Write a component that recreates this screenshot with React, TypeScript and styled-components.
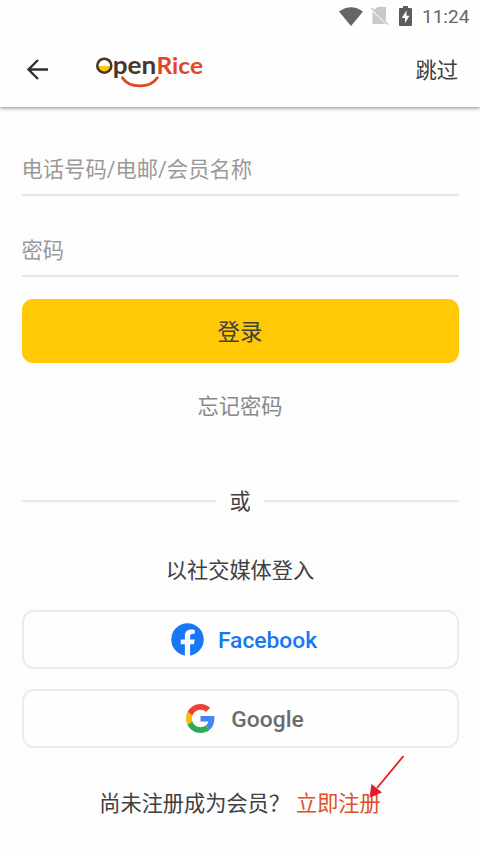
import React from "react";
import styled, { createGlobalStyle } from "styled-components";

const GlobalStyle = createGlobalStyle`
  * { box-sizing: border-box; }
  html, body { margin: 0; padding: 0; background: #fdfdfd; }
  body { font-family: Roboto, "Noto Sans CJK SC", sans-serif; color: #404040; }
  button, input { font: inherit; color: inherit; }
`;

const Screen = styled.div`
  width: 480px;
  height: 853px;
  overflow: hidden;
  display: flex;
  flex-direction: column;
  background: #fdfdfd;
`;

const Header = styled.header`
  flex: none;
  height: 107px;
  background: #fefefe;
  box-shadow: 0 1px 4px rgba(0, 0, 0, 0.45);
`;

const StatusBar = styled.div`
  height: 32px;
  padding-right: 11px;
  display: flex;
  align-items: center;
  justify-content: flex-end;
`;

const Clock = styled.span`
  font-size: 19px;
  line-height: 32px;
  width: 47px;
  margin: 1px 0 0 10px;
  color: #666;
  white-space: nowrap;
`;

const NavBar = styled.nav`
  height: 75px;
  padding: 0 22px 0 26px;
  display: flex;
  align-items: center;
`;

const PlainButton = styled.button`
  border: 0;
  padding: 0;
  background: none;
  display: flex;
`;

const Skip = styled(PlainButton)`
  margin-left: auto;
  padding-top: 2px;
  font-size: 21.3px;
  line-height: 30px;
`;

const Logo = styled.svg`
  margin-left: 43px;
  display: block;
`;

const Content = styled.main`
  flex: 1;
  padding: 0 21.5px;
  display: flex;
  flex-direction: column;
`;

const Field = styled.input<{ $height: number }>`
  width: 100%;
  height: ${(p) => p.$height}px;
  padding: ${(p) => p.$height - 51}px 0 0;
  border: 0;
  border-bottom: 2px solid #e6e6e6;
  border-radius: 0;
  outline: 0;
  background: none;
  font-size: 21.3px;
  &::placeholder { color: #999; opacity: 1; }
`;

const LoginButton = styled.button`
  flex: none;
  height: 64px;
  margin-top: 21.5px;
  padding: 0 0 1px;
  border: 0;
  border-radius: 11px;
  background: #ffc905;
  font-size: 22.5px;
`;

const Forgot = styled(PlainButton)`
  align-self: center;
  margin-top: 28px;
  font-size: 21.2px;
  line-height: 32px;
  color: #888;
`;

const Divider = styled.div`
  margin-top: 62px;
  height: 32px;
  display: flex;
  align-items: center;
  gap: 13.5px;
  font-size: 21.2px;
  line-height: 32px;
  &::before, &::after { content: ""; flex: 1; height: 2px; background: #e9e9e9; }
`;

const DividerLabel = styled.span`
  padding-top: 2px;
`;

const SocialTitle = styled.h2`
  margin: 38px 0 0;
  text-align: center;
  font-size: 21.2px;
  line-height: 32px;
  font-weight: 400;
`;

const SocialButton = styled.button<{ $color: string; $top: number; $gap: number; $shift: number }>`
  flex: none;
  height: 59px;
  margin-top: ${(p) => p.$top}px;
  padding: 3px 0 0 ${(p) => p.$shift}px;
  border: 2px solid #ebebeb;
  border-radius: 12px;
  background: #fefefe;
  display: flex;
  align-items: center;
  justify-content: center;
  gap: ${(p) => p.$gap}px;
  color: ${(p) => p.$color};
  font-size: 22.8px;
  font-weight: 500;
  & > svg { margin-top: -2px; }
`;

const SignUp = styled.div`
  position: relative;
  align-self: center;
  margin-top: 40px;
  display: flex;
  font-size: 21.2px;
  line-height: 32px;
  white-space: nowrap;
`;

const SignUpLink = styled.a`
  margin-left: 6px;
  color: #df4f27;
`;

const Pointer = styled.svg`
  position: absolute;
  right: -25px;
  top: -33px;
`;

const StatusIcons = styled.div`
  display: flex;
  align-items: center;
  gap: 10px;
  & > :nth-child(1) { margin-right: -2px; }
`;

const WifiIcon = () => (
  <svg width="24" height="19" viewBox="0 0 24 19">
    <path d="M0 4.600Q12-4 24 4.600L12 19Z" fill="#656565" />
  </svg>
);

const NoSimIcon = () => (
  <svg width="18" height="20" viewBox="0 0 18 20">
    <path d="M6.500 1H15V15.200L3 3.900ZM1.500 5.500L14.500 18H1.500Z" fill="#c8c8c8" />
    <path d="M.500 2L17 18.500" stroke="#c0c0c0" strokeWidth="1.500" />
  </svg>
);

const BatteryIcon = () => (
  <svg width="13" height="20" viewBox="0 0 13 20">
    <path d="M4 0H9V2H12Q13 2 13 3V19Q13 20 12 20H1Q0 20 0 19V3Q0 2 1 2H4Z" fill="#5d5d5d" />
    <path d="M7.500 4.500L2.800 12H6V17.200L10.400 9.700H7.500Z" fill="#fefefe" />
  </svg>
);

const BackIcon = () => (
  <svg width="24" height="24" viewBox="0 0 24 24" fill="none" stroke="#303030" strokeWidth="2.4">
    <path d="M22 11.500H2.500M12 2L2.500 11.500L12 21" />
  </svg>
);

const OpenRiceLogo = () => (
  <Logo width="116" height="50" viewBox="93 44.500 116 50" role="img" aria-label="OpenRice">
    <path d="M97.500 65.500H111Q110 72 104.300 72T97.500 65.500Z" fill="#ffc905" />
    <circle cx="104.300" cy="65.200" r="7" fill="none" stroke="#46352c" strokeWidth="2.600" />
    <g fontFamily="Lato" fontWeight="700">
      <text x="112.700" y="73.300" fontSize="24.500" textLength="43.500" lengthAdjust="spacingAndGlyphs" fill="#46352c">pen</text>
      <text x="156.500" y="73.300" fontSize="22.500" textLength="46.500" lengthAdjust="spacingAndGlyphs" fill="#df4726">Rice</text>
    </g>
    <path d="M122.400 77.200C129 88 150.500 88 157.300 77.200" fill="none" stroke="#df4726" strokeWidth="2.800" strokeLinecap="round" />
  </Logo>
);

const FacebookIcon = () => (
  <svg width="33" height="33" viewBox="0 0 24 24">
    <circle cx="12" cy="12" r="11.800" fill="#1877f2" />
    <path d="M10.100 24V15.500H7.100V12H10.100V9.400C10.100 6.400 11.900 4.700 14.600 4.700C15.900 4.700 17.300 5 17.300 5V7.900H15.800C14.300 7.900 13.900 8.800 13.900 9.800V12H17.200L16.700 15.500H13.900V24Z" fill="#fefefe" />
  </svg>
);

const GoogleIcon = () => (
  <svg width="29" height="29" viewBox="0 0 48 48">
    <path fill="#EA4335" d="M24 9.500c3.540 0 6.710 1.220 9.210 3.600l6.850-6.850C35.900 2.380 30.470 0 24 0 14.620 0 6.510 5.380 2.560 13.220l7.980 6.190C12.430 13.720 17.740 9.500 24 9.500z" />
    <path fill="#4285F4" d="M46.980 24.550c0-1.570-.15-3.090-.38-4.550H24v9.020h12.940c-.58 2.960-2.260 5.480-4.780 7.180l7.730 6c4.510-4.180 7.090-10.360 7.090-17.650z" />
    <path fill="#FBBC05" d="M10.530 28.590c-.48-1.450-.76-2.990-.76-4.590s.27-3.140.76-4.590l-7.980-6.190C.92 16.460 0 20.120 0 24c0 3.880.92 7.540 2.560 10.780l7.970-6.190z" />
    <path fill="#34A853" d="M24 48c6.480 0 11.930-2.130 15.890-5.810l-7.730-6c-2.150 1.450-4.920 2.300-8.160 2.300-6.260 0-11.570-4.220-13.470-9.910l-7.980 6.190C6.510 42.620 14.620 48 24 48z" />
  </svg>
);

export default function App() {
  return (
    <>
      <GlobalStyle />
      <Screen>
        <Header>
          <StatusBar>
            <StatusIcons>
              <WifiIcon />
              <NoSimIcon />
              <BatteryIcon />
            </StatusIcons>
            <Clock>11:24</Clock>
          </StatusBar>
          <NavBar>
            <PlainButton aria-label="返回"><BackIcon /></PlainButton>
            <OpenRiceLogo />
            <Skip>跳过</Skip>
          </NavBar>
        </Header>
        <Content>
          <Field $height={89} placeholder="电话号码/电邮/会员名称" />
          <Field $height={81} type="password" placeholder="密码" />
          <LoginButton>登录</LoginButton>
          <Forgot>忘记密码</Forgot>
          <Divider><DividerLabel>或</DividerLabel></Divider>
          <SocialTitle>以社交媒体登入</SocialTitle>
          <SocialButton $color="#1877f2" $top={23.4} $gap={14} $shift={8}>
            <FacebookIcon />
            Facebook
          </SocialButton>
          <SocialButton $color="#6c6c6c" $top={20} $gap={16} $shift={10}>
            <GoogleIcon />
            Google
          </SocialButton>
          <SignUp>
            <span>尚未注册成为会员？</span>
            <SignUpLink>立即注册</SignUpLink>
            <Pointer width="40" height="48" viewBox="0 0 40 48">
              <path d="M37.500 1L11 33" stroke="#e51c23" strokeWidth="1.800" />
              <path d="M3.500 42.500L5.500 29L16 37.500Z" fill="#e51c23" />
            </Pointer>
          </SignUp>
        </Content>
      </Screen>
    </>
  );
}
